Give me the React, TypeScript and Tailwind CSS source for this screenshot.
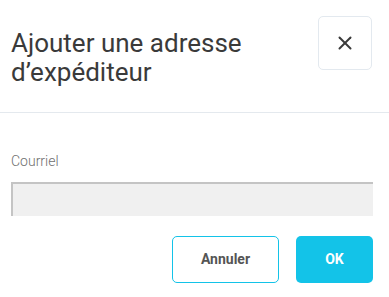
import { X } from 'lucide-react'

export default function App() {
  return (
    <div className="w-[389px] h-[297px] bg-white font-['Roboto',sans-serif] overflow-hidden">
      <div className="flex items-start justify-between pl-[11px] pr-[17px] pt-4 h-[113px] border-b border-[#e4e9ee]">
        <h2 className="mt-[13px] text-[26px] leading-[28.5px] font-normal text-[#3a3a3a]">
          Ajouter une adresse
          <br />
          d’expéditeur
        </h2>
        <button className="w-[54px] h-[54px] shrink-0 flex items-center justify-center rounded-[5px] border border-[#e3e9ef] bg-white text-[#3a3a3a]">
          <X size={22} strokeWidth={2.2} />
        </button>
      </div>

      <div className="pl-[11px] pr-4 pt-[40px]">
        <label className="block text-[14px] font-light text-[#6f6f6f] leading-4">Courriel</label>
        <input
          type="email"
          className="mt-[13px] block w-full h-[34px] bg-[#f0f0f0] border-t-2 border-l-2 border-[#c4c4c4] outline-none"
        />
        <div className="flex justify-end gap-[17px] mt-5">
          <button className="w-[107px] h-[47px] rounded-[5px] border border-[#13c3e8] bg-white text-[14px] font-bold text-[#555555]">
            Annuler
          </button>
          <button className="w-[77px] h-[47px] rounded-[5px] bg-[#13c3e8] text-[14px] font-bold text-white">
            OK
          </button>
        </div>
      </div>
    </div>
  )
}
